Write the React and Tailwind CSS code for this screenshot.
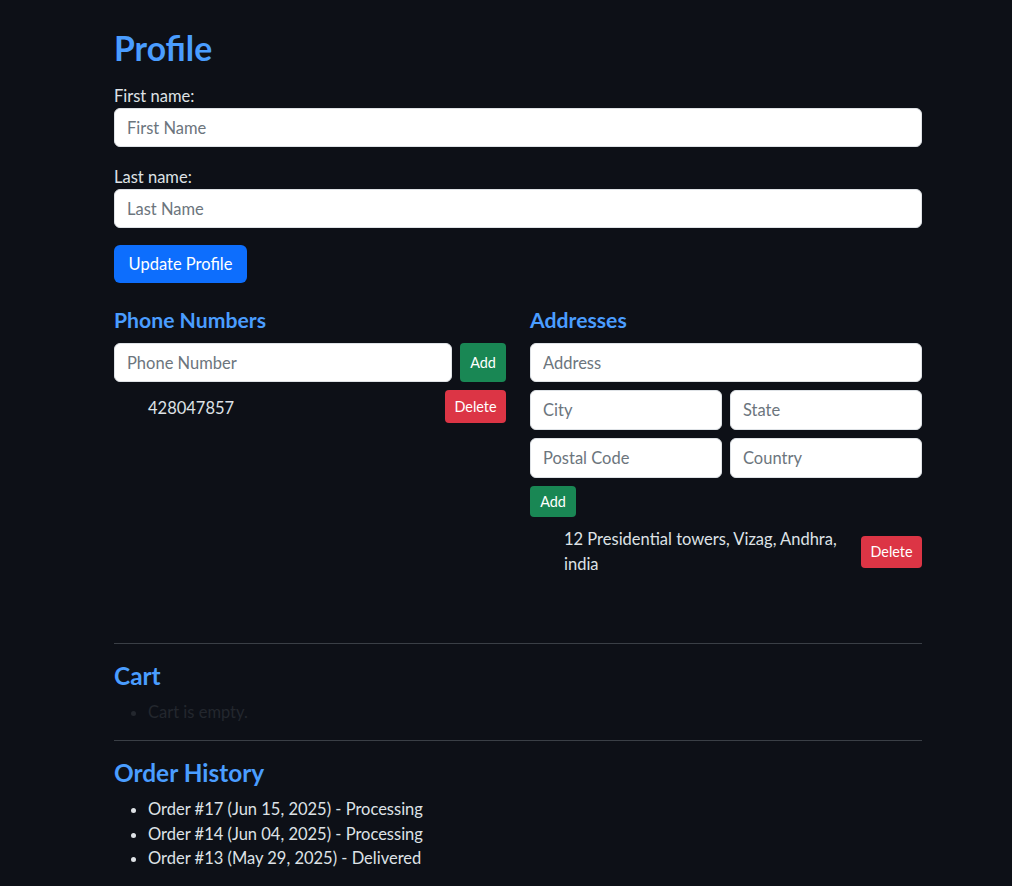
import React from 'react';

const FONT = "font-['Lato',sans-serif]";
const HEAD = "font-bold text-[#4a9dff]";

function TextInput({ placeholder, className = '' }) {
  return (
    <input
      placeholder={placeholder}
      className={`block px-3 rounded-[6px] bg-white border border-[#dee2e6] text-[16.5px] text-[#212529] placeholder:text-[#6c757d] outline-none min-w-0 ${className}`}
    />
  );
}

function Field({ label, placeholder, className = '' }) {
  return (
    <div className={className}>
      <label className="block h-6 leading-6 text-[16.5px]">{label}</label>
      <TextInput placeholder={placeholder} className="w-full h-[39px]" />
    </div>
  );
}

export default function App() {
  return (
    <div className={`min-h-screen bg-[#0d1017] text-[#dee2e6] ${FONT}`}>
      <div className="ml-[114px] w-[808px] pt-[26px] pb-8">
        <h1 className={`h-[45px] leading-[45px] text-[33.7px] ${HEAD}`}>Profile</h1>

        <Field label="First name:" placeholder="First Name" className="mt-[13px] mb-[18px]" />
        <Field label="Last name:" placeholder="Last Name" />

        <button className="mt-[17px] h-[38px] w-[133px] rounded-[6px] bg-[#0d6efd] text-white text-[16.5px]">
          Update Profile
        </button>

        <div className="mt-[23px] grid grid-cols-2 gap-6">
          {/* Phone numbers */}
          <div>
            <h4 className={`h-7 leading-7 text-[21.2px] ${HEAD} mb-[9px]`}>Phone Numbers</h4>
            <div className="flex gap-2">
              <TextInput placeholder="Phone Number" className="flex-1 h-[39px]" />
              <button className="w-[46px] rounded-[4px] bg-[#198754] text-white text-[14.4px]">Add</button>
            </div>
            <ul className="mt-2 pl-[34px]">
              <li className="flex items-center justify-between">
                <span className="text-[16.5px] pt-[3px]">428047857</span>
                <button className="h-[33px] w-[61px] rounded-[4px] bg-[#dc3545] text-white text-[14.4px]">Delete</button>
              </li>
            </ul>
          </div>

          {/* Addresses */}
          <div>
            <h4 className={`h-7 leading-7 text-[21.2px] ${HEAD} mb-[9px]`}>Addresses</h4>
            <TextInput placeholder="Address" className="w-full h-[39px]" />
            <div className="mt-2 grid grid-cols-2 gap-2">
              <TextInput placeholder="City" className="w-full h-10" />
              <TextInput placeholder="State" className="w-full h-10" />
            </div>
            <div className="mt-2 grid grid-cols-2 gap-2">
              <TextInput placeholder="Postal Code" className="w-full h-10" />
              <TextInput placeholder="Country" className="w-full h-10" />
            </div>
            <button className="mt-2 h-[31px] w-[46px] rounded-[4px] bg-[#198754] text-white text-[14.4px]">Add</button>
            <ul className="mt-[10px] pl-[34px]">
              <li className="flex items-center justify-between gap-2">
                <span className="text-[16.5px] leading-[25px]">12 Presidential towers, Vizag, Andhra, india</span>
                <button className="shrink-0 h-[32px] w-[61px] rounded-[4px] bg-[#dc3545] text-white text-[14.4px]">Delete</button>
              </li>
            </ul>
          </div>
        </div>

        <hr className="mt-[66px] border-0 border-t border-[#3a3f46]" />
        <h3 className={`mt-4 h-8 leading-8 text-[24.4px] ${HEAD}`}>Cart</h3>
        <ul className="mt-2 pl-[34px] list-disc text-[#23272e]">
          <li className="leading-6 text-[16.5px]">Cart is empty.</li>
        </ul>
        <hr className="mt-4 border-0 border-t border-[#3a3f46]" />
        <h3 className={`mt-4 h-8 leading-8 text-[24.4px] ${HEAD}`}>Order History</h3>
        <ul className="mt-2 pl-[34px] list-disc">
          <li className="leading-[24.5px] text-[16.5px]">Order #17 (Jun 15, 2025) - Processing</li>
          <li className="leading-[24.5px] text-[16.5px]">Order #14 (Jun 04, 2025) - Processing</li>
          <li className="leading-[24.5px] text-[16.5px]">Order #13 (May 29, 2025) - Delivered</li>
        </ul>
      </div>
    </div>
  );
}
